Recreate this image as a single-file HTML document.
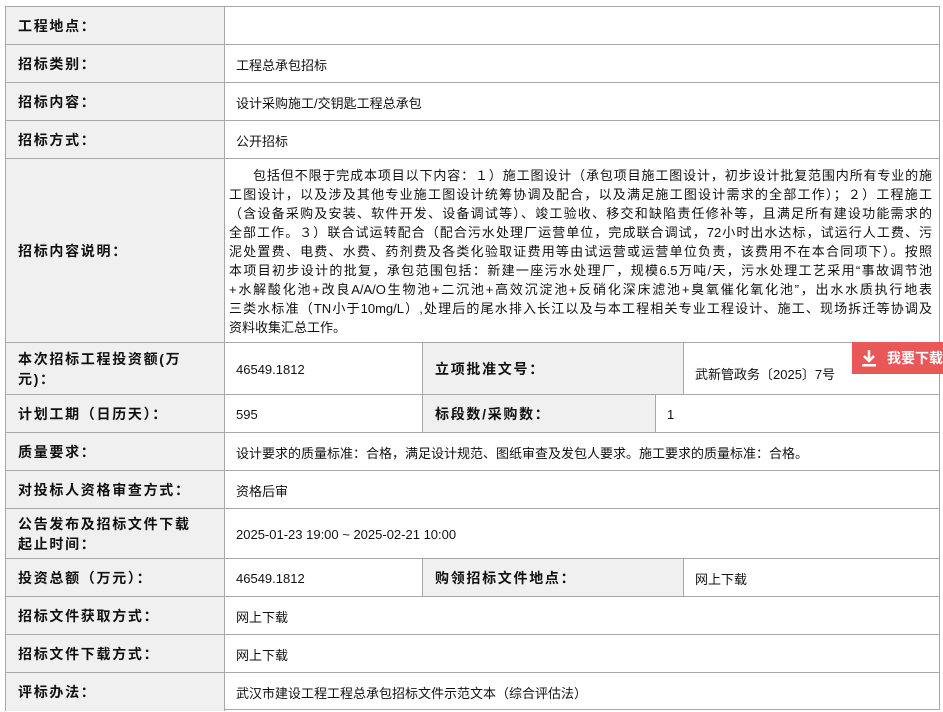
<!DOCTYPE html>
<html><head><meta charset="utf-8"><style>
body{margin:0;background:#fff;font-family:"Liberation Sans","Noto Sans CJK SC",sans-serif;font-size:13px;color:#111;}
.t{position:absolute;left:5px;top:6px;width:935px;}
.r{position:absolute;left:0;width:935px;border-top:1px solid #a8a8a8;}
.c{position:absolute;top:0;bottom:0;display:flex;align-items:center;box-sizing:border-box;padding-left:12px;border-left:1px solid #a8a8a8;}
.l{background:#f0f0f0;font-weight:bold;font-size:14px;letter-spacing:1.7px;padding-left:12px;padding-right:30px;line-height:20px;}
.v{padding-left:11px;}
.d div{text-align:justify;text-align-last:justify;height:19px;line-height:19px;}
.btn{position:absolute;left:852px;top:342px;width:91px;height:32px;background:#e85858;color:#fff;font-weight:bold;font-size:14px;display:flex;align-items:center;}
</style></head><body>
<div class="t" style="height:704px;border-right:1px solid #a8a8a8;border-bottom:1px solid #a8a8a8;box-sizing:border-box;">
<div class="r" style="top:0;height:38px"><div class="c l" style="left:0;width:219px">工程地点：</div><div class="c v" style="left:219px;right:0"></div></div>
<div class="r" style="top:38px;height:38px"><div class="c l" style="left:0;width:219px">招标类别：</div><div class="c v" style="left:219px;right:0">工程总承包招标</div></div>
<div class="r" style="top:76px;height:38px"><div class="c l" style="left:0;width:219px">招标内容：</div><div class="c v" style="left:219px;right:0">设计采购施工/交钥匙工程总承包</div></div>
<div class="r" style="top:114px;height:38px"><div class="c l" style="left:0;width:219px">招标方式：</div><div class="c v" style="left:219px;right:0">公开招标</div></div>
<div class="r" style="top:152px;height:184px"><div class="c l" style="left:0;width:219px">招标内容说明：</div><div class="c v d" style="left:219px;right:0;padding-left:4px;padding-right:8px;display:block;padding-top:7px">
<div style="padding-left:24px">包括但不限于完成本项目以下内容：１）施工图设计（承包项目施工图设计，初步设计批复范围内所有专业的施</div>
<div>工图设计，以及涉及其他专业施工图设计统筹协调及配合，以及满足施工图设计需求的全部工作）；２）工程施工</div>
<div>（含设备采购及安装、软件开发、设备调试等）、竣工验收、移交和缺陷责任修补等，且满足所有建设功能需求的</div>
<div>全部工作。３）联合试运转配合（配合污水处理厂运营单位，完成联合调试，72小时出水达标，试运行人工费、污</div>
<div>泥处置费、电费、水费、药剂费及各类化验取证费用等由试运营或运营单位负责，该费用不在本合同项下）。按照</div>
<div>本项目初步设计的批复，承包范围包括：新建一座污水处理厂，规模6.5万吨/天，污水处理工艺采用“事故调节池</div>
<div>+水解酸化池+改良A/A/O生物池+二沉池+高效沉淀池+反硝化深床滤池+臭氧催化氧化池”，出水水质执行地表</div>
<div>三类水标准（TN小于10mg/L）,处理后的尾水排入长江以及与本工程相关专业工程设计、施工、现场拆迁等协调及</div>
<div style="text-align-last:left">资料收集汇总工作。</div>
</div></div>
<div class="r" style="top:336px;height:52px"><div class="c l" style="left:0;width:219px">本次招标工程投资额(万元)：</div><div class="c v" style="left:219px;width:198px">46549.1812</div><div class="c l" style="left:417px;width:261px">立项批准文号：</div><div class="c v" style="left:678px;right:0;padding-top:8px">武新管政务〔2025〕7号</div></div>
<div class="r" style="top:388px;height:38px"><div class="c l" style="left:0;width:219px">计划工期（日历天）：</div><div class="c v" style="left:219px;width:198px">595</div><div class="c l" style="left:417px;width:233px">标段数/采购数：</div><div class="c v" style="left:650px;right:0">1</div></div>
<div class="r" style="top:426px;height:38px"><div class="c l" style="left:0;width:219px">质量要求：</div><div class="c v" style="left:219px;right:0">设计要求的质量标准：合格，满足设计规范、图纸审查及发包人要求。施工要求的质量标准：合格。</div></div>
<div class="r" style="top:464px;height:38px"><div class="c l" style="left:0;width:219px">对投标人资格审查方式：</div><div class="c v" style="left:219px;right:0">资格后审</div></div>
<div class="r" style="top:502px;height:50px"><div class="c l" style="left:0;width:219px">公告发布及招标文件下载起止时间：</div><div class="c v" style="left:219px;right:0">2025-01-23 19:00 ~ 2025-02-21 10:00</div></div>
<div class="r" style="top:552px;height:38px"><div class="c l" style="left:0;width:219px">投资总额（万元）：</div><div class="c v" style="left:219px;width:198px">46549.1812</div><div class="c l" style="left:417px;width:261px">购领招标文件地点：</div><div class="c v" style="left:678px;right:0">网上下载</div></div>
<div class="r" style="top:590px;height:38px"><div class="c l" style="left:0;width:219px">招标文件获取方式：</div><div class="c v" style="left:219px;right:0">网上下载</div></div>
<div class="r" style="top:628px;height:38px"><div class="c l" style="left:0;width:219px">招标文件下载方式：</div><div class="c v" style="left:219px;right:0">网上下载</div></div>
<div class="r" style="top:666px;height:38px"><div class="c l" style="left:0;width:219px">评标办法：</div><div class="c v" style="left:219px;right:0">武汉市建设工程工程总承包招标文件示范文本（综合评估法）</div></div>
</div>
<div class="btn"><svg width="16" height="18" viewBox="0 0 16 18" style="margin:0 10px 0 9px"><path d="M8 1v10M3 7l5 5 5-5" stroke="#fff" stroke-width="2.5" fill="none"/><rect x="1" y="15" width="14" height="2.5" fill="#fff"/></svg>我要下载</div>
</body></html>
